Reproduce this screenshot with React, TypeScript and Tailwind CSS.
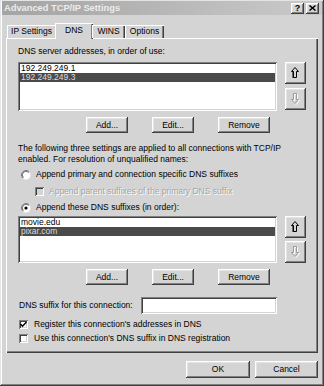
import type { ReactNode } from "react"

const raised =
  "shadow-[inset_-1px_-1px_0_#404040,inset_1px_1px_0_#ffffff,inset_-2px_-2px_0_#808080,inset_2px_2px_0_#e4e4e4]"
const sunken =
  "shadow-[inset_1px_1px_0_#808080,inset_-1px_-1px_0_#ffffff,inset_2px_2px_0_#404040,inset_-2px_-2px_0_#d4d4d4]"

function Btn({ label, w, disabled }: { label: string; w: string; disabled?: boolean }) {
  return (
    <div className={`${w} h-[16px] flex items-center justify-center bg-[#d4d4d4] ${raised} ${disabled ? "text-[#9a9a9a]" : ""}`}>
      {label}
    </div>
  )
}

function ArrowBtn({ dir, disabled }: { dir: "up" | "down"; disabled?: boolean }) {
  const pts =
    dir === "up"
      ? "4,0.5 7.5,4.5 5.5,4.5 5.5,10.5 2.5,10.5 2.5,4.5 0.5,4.5"
      : "4,10.5 7.5,6.5 5.5,6.5 5.5,0.5 2.5,0.5 2.5,6.5 0.5,6.5"
  return (
    <div className={`w-[21px] h-[22px] flex items-center justify-center bg-[#d4d4d4] ${raised}`}>
      <svg width="9" height="12" viewBox="0 0 9 12">
        {disabled ? (
          <>
            <polygon points={pts} transform="translate(1,1)" fill="none" stroke="#ffffff" strokeWidth="1" />
            <polygon points={pts} fill="none" stroke="#9a9a9a" strokeWidth="1" />
          </>
        ) : (
          <>
            <polygon points={pts} fill="none" stroke="#000" strokeWidth="1" />
            <line x1="2" y1={dir === "up" ? 4.5 : 0.5} x2="2" y2={dir === "up" ? 11 : 6.5} stroke="#000" strokeWidth="1" />
          </>
        )}
      </svg>
    </div>
  )
}

function ListBox({ items, h }: { items: { text: string; sel?: boolean }[]; h: string }) {
  return (
    <div className={`w-[259px] ${h} bg-white ${sunken} p-[2px]`}>
      {items.map((it) => (
        <div
          key={it.text}
          className={`h-[9px] leading-[9px] pl-[1px] ${it.sel ? "bg-[#4a4a4a] text-[#dcdcdc]" : ""}`}
        >
          {it.text}
        </div>
      ))}
    </div>
  )
}

function Radio({ on }: { on?: boolean }) {
  return (
    <svg width="10" height="10" viewBox="0 0 10 10" className="shrink-0">
      <circle cx="5" cy="5" r="4.5" fill="#ffffff" />
      <path d="M1.8 8.2 A4.5 4.5 0 0 1 8.2 1.8" fill="none" stroke="#808080" strokeWidth="1" />
      <path d="M2.4 7.6 A3.6 3.6 0 0 1 7.6 2.4" fill="none" stroke="#404040" strokeWidth="0.8" />
      {on && <circle cx="5" cy="5" r="1.6" fill="#000" />}
    </svg>
  )
}

function Check({ on, disabled }: { on?: boolean; disabled?: boolean }) {
  return (
    <div className={`w-[9px] h-[9px] shrink-0 ${disabled ? "bg-[#d4d4d4]" : "bg-white"} ${sunken} flex items-center justify-center`}>
      {on && (
        <svg width="7" height="7" viewBox="0 0 7 7">
          <path d="M0.5 3 L2.5 5.2 L6.5 1" fill="none" stroke="#000" strokeWidth="1.5" />
        </svg>
      )}
    </div>
  )
}

function Row({ children, className }: { children: ReactNode; className?: string }) {
  return <div className={`flex items-center h-[11px] ${className ?? ""}`}>{children}</div>
}

export default function App() {
  return (
    <div className="w-[324px] h-[386px] bg-[#d4d4d4] text-black font-['Liberation_Sans',Arial,sans-serif] text-[8.5px] leading-[11px] flex flex-col shadow-[inset_-1px_-1px_0_#404040,inset_1px_1px_0_#e4e4e4,inset_-2px_-2px_0_#808080,inset_2px_2px_0_#ffffff]">
      {/* title bar */}
      <div className="mx-[2px] mt-[1px] h-[14px] flex items-center justify-between pl-[2px] pr-[3px] bg-gradient-to-r from-[#a4a4a4] to-[#cacaca]">
        <span className="font-bold text-[9.3px] text-[#ececec]">Advanced TCP/IP Settings</span>
        <div className="flex gap-[2px]">
          <div className={`w-[13px] h-[11px] flex items-center justify-center bg-[#d4d4d4] font-bold text-[9px] ${raised}`}>?</div>
          <div className={`w-[13px] h-[11px] flex items-center justify-center bg-[#d4d4d4] ${raised}`}>
            <svg width="7" height="6" viewBox="0 0 7 6">
              <path d="M0.5 0.5 L6.5 5.5 M6.5 0.5 L0.5 5.5" stroke="#000" strokeWidth="1.5" />
            </svg>
          </div>
        </div>
      </div>

      <div className="flex-1 flex flex-col px-[6px]">
        {/* tabs */}
        <div className="h-[23px] flex items-end pl-[1px] relative z-10">
          <div className="w-[49px] h-[13px] flex items-center justify-center shadow-[inset_1px_1px_0_#ffffff,inset_-1px_0_0_#404040]">
            IP Settings
          </div>
          <div className="w-[38px] h-[16px] -mx-[1px] mb-[-1px] pb-[2px] flex items-center justify-center bg-[#d4d4d4] shadow-[inset_1px_1px_0_#ffffff,inset_-1px_0_0_#404040,inset_-2px_0_0_#808080]">
            DNS
          </div>
          <div className="w-[33px] h-[13px] flex items-center justify-center shadow-[inset_1px_1px_0_#ffffff,inset_-1px_0_0_#404040,inset_-2px_0_0_#808080]">
            WINS
          </div>
          <div className="w-[39px] h-[13px] flex items-center justify-center shadow-[inset_1px_1px_0_#ffffff,inset_-1px_0_0_#404040,inset_-2px_0_0_#808080]">
            Options
          </div>
        </div>

        {/* panel */}
        <div className="h-[315px] flex flex-col pl-[12px] pt-[8px] shadow-[inset_1px_1px_0_#ffffff,inset_-1px_-1px_0_#404040,inset_-2px_-2px_0_#808080]">
          <div className="h-[10px] leading-[10px]">DNS server addresses, in order of use:</div>

          <div className="flex mt-[6px] gap-[8px]">
            <ListBox h="h-[49px]" items={[{ text: "192.249.249.1" }, { text: "192.249.249.3", sel: true }]} />
            <div className="flex flex-col gap-[4px]">
              <ArrowBtn dir="up" />
              <ArrowBtn dir="down" disabled />
            </div>
          </div>

          <div className="flex mt-[6px] pl-[68px] gap-[24px]">
            <Btn label="Add..." w="w-[42px]" />
            <Btn label="Edit..." w="w-[42px]" />
            <Btn label="Remove" w="w-[52px]" />
          </div>

          <div className="mt-[10px]">
            The following three settings are applied to all connections with TCP/IP
            <br />
            enabled. For resolution of unqualified names:
          </div>

          <Row className="mt-[4px] pl-[3px] gap-[5px]">
            <Radio />
            <span>Append primary and connection specific DNS suffixes</span>
          </Row>
          <Row className="mt-[6px] pl-[17px] gap-[5px]">
            <Check disabled />
            <span className="text-[#a4a4a4] [text-shadow:1px_1px_0_#ffffff]">Append parent suffixes of the primary DNS suffix</span>
          </Row>
          <Row className="mt-[5px] pl-[3px] gap-[5px]">
            <Radio on />
            <span>Append these DNS suffixes (in order):</span>
          </Row>

          <div className="flex mt-[3px] gap-[8px]">
            <ListBox h="h-[47px]" items={[{ text: "movie.edu" }, { text: "pixar.com", sel: true }]} />
            <div className="flex flex-col gap-[3px]">
              <ArrowBtn dir="up" />
              <ArrowBtn dir="down" disabled />
            </div>
          </div>

          <div className="flex mt-[6px] pl-[68px] gap-[24px]">
            <Btn label="Add..." w="w-[42px]" />
            <Btn label="Edit..." w="w-[42px]" />
            <Btn label="Remove" w="w-[52px]" />
          </div>

          <div className="flex items-center mt-[12px] h-[17px]">
            <span className="pl-[1px] w-[123px]">DNS suffix for this connection:</span>
            <div className={`w-[136px] h-[17px] bg-white ${sunken}`} />
          </div>

          <Row className="mt-[5px] pl-[1px] gap-[6px]">
            <Check on />
            <span>Register this connection's addresses in DNS</span>
          </Row>
          <Row className="mt-[3px] pl-[1px] gap-[6px]">
            <Check />
            <span>Use this connection's DNS suffix in DNS registration</span>
          </Row>
        </div>

        {/* footer */}
        <div className="flex justify-end gap-[5px] mt-[8px] pr-[0px]">
          <Btn label="OK" w="w-[64px] !h-[17px]" />
          <Btn label="Cancel" w="w-[63px] !h-[17px]" />
        </div>
      </div>
    </div>
  )
}
